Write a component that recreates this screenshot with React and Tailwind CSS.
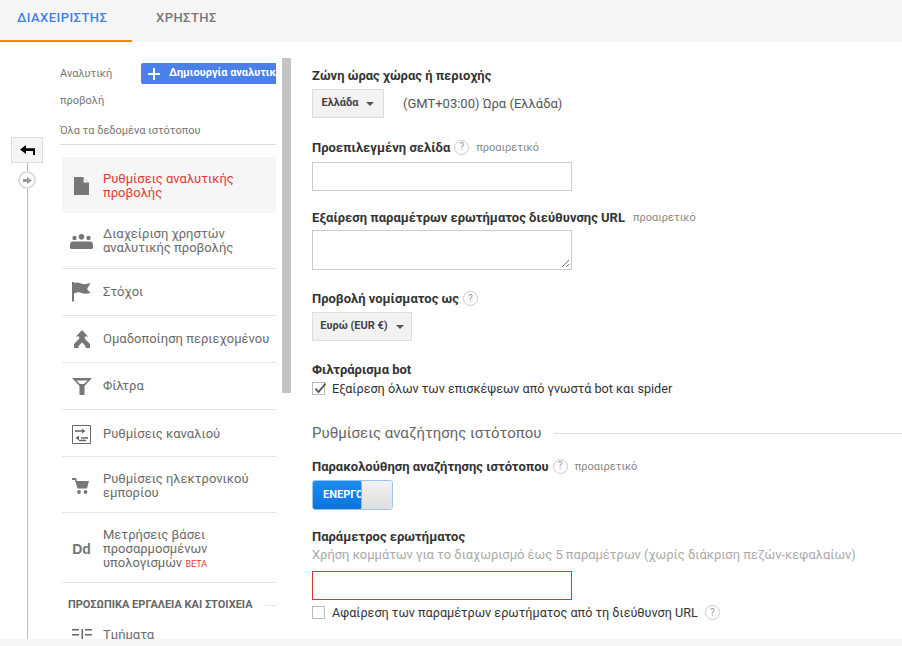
const rowClass = "flex items-center border-b border-[#e4e4ec] ml-[2px] text-[13px] leading-[14px] text-[#6b6b6b]";

function DocIcon() {
  return (
    <svg width="15" height="18" viewBox="0 0 15 18" fill="#777">
      <path d="M0 0h9l6 6v12H0z" />
      <path d="M9.600 0.500 14.500 5.400H9.600z" fill="#f6f6f6" />
    </svg>
  );
}

function UsersIcon() {
  return (
    <svg width="23" height="15" viewBox="0 0 23 15" fill="#777">
      <circle cx="4.500" cy="4" r="2.200" />
      <circle cx="11.500" cy="2.800" r="2.800" />
      <circle cx="18.500" cy="4" r="2.200" />
      <path d="M0 11q0-3.500 3-3.500h17q3 0 3 3.500v2.500q0 1.500-1.500 1.500h-20Q0 15 0 13.500z" />
    </svg>
  );
}

function FlagIcon() {
  return (
    <svg width="19" height="20" viewBox="0 0 19 20" fill="#777">
      <path d="M0 0h2v19.500H0z" />
      <path d="M2 1q4-1 7 .5t9.500-.5l-3.500 6 3.500 4q-6 1.500-9 0t-7.500.5z" />
    </svg>
  );
}

function MergeIcon() {
  return (
    <svg width="16" height="18" viewBox="0 0 16 18" fill="#777">
      <path d="M8 0l6 6.500H10.800v2.300L16 14v4h-4.500v-2L8 12.500 4.500 16v2H0v-4l5.200-5.200V6.500H2z" />
    </svg>
  );
}

function FilterIcon() {
  return (
    <svg width="20" height="17" viewBox="0 0 20 17" fill="#777">
      <path d="M0 0h20l-7.500 8v9h-5V8zM4.500 2.500 8 6h4l3.500-3.500z" fillRule="evenodd" />
    </svg>
  );
}

function ChannelIcon() {
  return (
    <svg width="19" height="19" viewBox="0 0 19 19" fill="none" stroke="#666">
      <path d="M.5.500h18v18H.5z" />
      <path d="M3 6h8M14 15.500H7" strokeWidth="1.500" />
      <path d="M10 3.500 13.500 6 10 8.500zM7 10.500 3.500 13 7 15.500z" fill="#666" stroke="none" />
      <path d="M9 13h7" strokeWidth="1.500" />
    </svg>
  );
}

function CartIcon() {
  return (
    <svg width="17" height="16" viewBox="0 0 17 16" fill="#777" className="-ml-[3px]">
      <path d="M0 0h4l1 3h12l-2 7.500H5.500L3 2H0z" />
      <circle cx="7" cy="14" r="1.900" />
      <circle cx="13.500" cy="14" r="1.900" />
    </svg>
  );
}

function SegmentsIcon() {
  return (
    <svg width="20" height="12" viewBox="0 0 20 12" fill="#666">
      <path d="M0 0h7v1.500H0zM0 5h7v1.500H0zM0 10h7v1.500H0zM9.500 0H11v12H9.500zM13 0h7v1.500h-7zM13 5h7v1.500h-7zM13 10h7v1.500h-7z" />
    </svg>
  );
}

function Help() {
  return (
    <span className="inline-flex items-center justify-center w-[15px] h-[15px] rounded-full border border-[#ccc] text-[10px] leading-none text-[#999]">
      ?
    </span>
  );
}

function Optional() {
  return <span className="text-[11px] text-[#888]">προαιρετικό</span>;
}

function Caret() {
  return <span className="w-0 h-0 border-x-[4px] border-x-transparent border-t-[4px] border-t-[#555]" />;
}

function NavRow({ icon, className, children }) {
  return (
    <div className={`${rowClass} ${className}`}>
      <div className="w-[41px] flex justify-center shrink-0 pr-[2px]">{icon}</div>
      <div>{children}</div>
    </div>
  );
}

export default function App() {
  return (
    <div className="w-[902px] h-[646px] overflow-hidden bg-white flex flex-col font-['Roboto',sans-serif]">
      {/* tabs */}
      <div className="h-[42px] shrink-0 bg-[#f6f6f6] flex">
        <div className="w-[132px] h-[42px] border-b-2 border-[#f08c00] pl-[17px] pt-[8px] text-[13px] font-medium text-[#3b82e6] tracking-[0.45px]">
          ΔΙΑΧΕΙΡΙΣΤΗΣ
        </div>
        <div className="pl-[24px] pt-[8px] text-[13px] font-medium text-[#777] tracking-[0.45px]">ΧΡΗΣΤΗΣ</div>
      </div>

      <div className="flex-1 flex min-h-0">
        {/* back rail */}
        <div className="w-[60px] shrink-0 pl-[11px] pt-[95px] flex flex-col items-start">
          <div className="w-[32px] h-[26px] bg-[#f5f5f5] border border-[#ddd] flex items-center justify-center text-black">
            <svg width="15" height="10" viewBox="0 0 15 10" fill="currentColor">
              <path d="M0 4.500 6 0v3.200h9V10h-2V6H6v3z" />
            </svg>
          </div>
          <div className="w-[32px] flex flex-col items-center flex-1">
            <div className="w-px h-[8px] bg-[#bbb]" />
            <div className="w-[18px] h-[18px] rounded-full border-2 border-[#ddd] flex items-center justify-center">
              <svg width="9" height="7" viewBox="0 0 9 7" fill="#999">
                <path d="M0 2h4V0l5 3.500L4 7V5H0z" />
              </svg>
            </div>
            <div className="w-px flex-1 bg-[#bbb]" />
          </div>
        </div>

        {/* sidebar */}
        <div className="w-[216px] shrink-0 overflow-hidden h-[597px]">
          <div className="flex items-start h-[103px] border-b border-[#d8d8e0] text-[11px] text-[#777]">
            <div className="w-[81px] pt-[18px] leading-[27px]">
              Αναλυτική
              <br />
              προβολή
              <div className="whitespace-nowrap mt-[3px]">Όλα τα δεδομένα ιστότοπου</div>
            </div>
            <div className="mt-[21px] w-[135px] h-[21px] bg-[#4a80e8] rounded-l-[2px] flex items-center overflow-hidden text-white font-bold text-[11px] whitespace-nowrap pl-[7px]">
              <svg width="12" height="12" viewBox="0 0 12 12" fill="#fff" className="shrink-0 mr-[9px]">
                <path d="M5 0h2v5h5v2H7v5H5V7H0V5h5z" />
              </svg>
              Δημιουργία αναλυτικής προβολής
            </div>
          </div>
          <div className="h-[12px] bg-white" />
          <NavRow icon={<DocIcon />} className="h-[56px] bg-[#f6f6f6] border-b-0 pt-[2px] text-[#e53935]">
            Ρυθμίσεις αναλυτικής
            <br />
            προβολής
          </NavRow>
          <NavRow icon={<UsersIcon />} className="h-[56px] pt-[1px]">
            Διαχείριση χρηστών
            <br />
            αναλυτικής προβολής
          </NavRow>
          <NavRow icon={<FlagIcon />} className="h-[47px]">Στόχοι</NavRow>
          <NavRow icon={<MergeIcon />} className="h-[47px]">Ομαδοποίηση περιεχομένου</NavRow>
          <NavRow icon={<FilterIcon />} className="h-[47px]">Φίλτρα</NavRow>
          <NavRow icon={<ChannelIcon />} className="h-[47px] pt-[2px]">Ρυθμίσεις καναλιού</NavRow>
          <NavRow icon={<CartIcon />} className="h-[56px] pt-[2px]">
            Ρυθμίσεις ηλεκτρονικού
            <br />
            εμπορίου
          </NavRow>
          <NavRow icon={<span className="font-['Liberation_Sans',sans-serif] font-bold text-[14px] text-[#777]">Dd</span>} className="h-[70px] pt-[3px]">
            Μετρήσεις βάσει
            <br />
            προσαρμοσμένων
            <br />
            υπολογισμών <span className="text-[9px] text-[#e53935]">BETA</span>
          </NavRow>
          <div className="flex items-center h-[43px] pt-[2px] ml-[8px] text-[11px] font-bold text-[#666] whitespace-nowrap">
            ΠΡΟΣΩΠΙΚΑ ΕΡΓΑΛΕΙΑ ΚΑΙ ΣΤΟΙΧΕΙΑ
            <div className="flex-1 h-px bg-[#e4e4ec] ml-[10px]" />
          </div>
          <div className="flex items-center ml-[2px] -mt-[1px] text-[13px] text-[#6b6b6b]">
            <div className="w-[41px] flex justify-center pr-[2px]"><SegmentsIcon /></div>
            Τμήματα
          </div>
        </div>

        {/* scrollbar */}
        <div className="w-[9px] h-[335px] ml-[6px] mt-[16px] shrink-0 bg-[#c4c4c4]" />

        {/* form */}
        <div className="flex-1 min-w-0 pl-[21px] pt-[26px] text-[13px] text-[#333] overflow-hidden">
          <div className="font-bold leading-[15px]">Ζώνη ώρας χώρας ή περιοχής</div>
          <div className="flex items-center mt-[6px]">
            <div className="w-[72px] h-[29px] bg-[#f2f2f2] border border-[#ddd] flex items-center justify-center gap-[8px] text-[11px] font-bold text-[#444]">
              Ελλάδα <Caret />
            </div>
            <div className="ml-[19px] text-[#555]">(GMT+03:00) Ώρα (Ελλάδα)</div>
          </div>

          <div className="flex items-center gap-[4px] mt-[21px] leading-[15px]">
            <span className="font-bold">Προεπιλεγμένη σελίδα</span>
            <Help />
            <span className="ml-[3px]"><Optional /></span>
          </div>
          <div className="w-[260px] h-[29px] border border-[#ccc] mt-[7px]" />

          <div className="flex items-center gap-[8px] mt-[19px] leading-[15px] whitespace-nowrap">
            <span className="font-bold">Εξαίρεση παραμέτρων ερωτήματος διεύθυνσης URL</span>
            <Optional />
          </div>
          <div className="relative w-[260px] h-[40px] border border-[#ccc] mt-[5px]">
            <svg width="9" height="9" viewBox="0 0 9 9" stroke="#777" className="absolute right-px bottom-px">
              <path d="M1 8 8 1M5 8 8 5" />
            </svg>
          </div>

          <div className="flex items-center gap-[4px] mt-[21px] leading-[15px]">
            <span className="font-bold">Προβολή νομίσματος ως</span>
            <Help />
          </div>
          <div className="w-[100px] h-[29px] bg-[#f2f2f2] border border-[#ddd] flex items-center justify-center gap-[8px] text-[11px] font-bold text-[#444] mt-[6px]">
            Ευρώ (EUR €) <Caret />
          </div>

          <div className="font-bold leading-[15px] mt-[21px]">Φιλτράρισμα bot</div>
          <div className="flex items-center gap-[7px] mt-[4px] leading-[15px] text-[12.650px]">
            <div className="relative w-[13px] h-[13px] border border-[#bbb]">
              <svg width="14" height="13" viewBox="0 0 14 13" fill="none" stroke="#555" strokeWidth="1.800" className="absolute -top-[1px] left-0">
                <path d="M2.500 6.500 5.500 10 12.500 1.500" />
              </svg>
            </div>
            <span>Εξαίρεση όλων των επισκέψεων από γνωστά bot και spider</span>
          </div>

          <div className="flex items-center mt-[27px] text-[15px] leading-[20px] text-[#666]">
            Ρυθμίσεις αναζήτησης ιστότοπου
            <div className="flex-1 h-px bg-[#ddd] ml-[13px]" />
          </div>

          <div className="flex items-center gap-[4px] mt-[15px] leading-[15px] whitespace-nowrap">
            <span className="font-bold">Παρακολούθηση αναζήτησης ιστότοπου</span>
            <Help />
            <span className="ml-[3px]"><Optional /></span>
          </div>
          <div className="flex w-[81px] h-[30px] mt-[6px] rounded-[3px] border border-[#9dc3ee] overflow-hidden">
            <div className="w-[48px] bg-gradient-to-b from-[#1a8cf0] to-[#0b74dc] text-white text-[11px] font-bold flex items-center pl-[10px] overflow-hidden whitespace-nowrap">ΕΝΕΡΓΟ</div>
            <div className="flex-1 bg-gradient-to-b from-[#f2f2f2] to-[#dedede] border-l border-[#aaa] rounded-l-[2px]" />
          </div>

          <div className="font-bold leading-[15px] mt-[19px]">Παράμετρος ερωτήματος</div>
          <div className="mt-[3px] leading-[15px] text-[#aaa] whitespace-nowrap text-[12.950px]">Χρήση κομμάτων για το διαχωρισμό έως 5 παραμέτρων (χωρίς διάκριση πεζών-κεφαλαίων)</div>
          <div className="w-[260px] h-[29px] border border-[#d33] mt-[9px]" />
          <div className="flex items-center gap-[7px] mt-[5px] leading-[15px] whitespace-nowrap text-[12.650px]">
            <div className="w-[13px] h-[13px] border border-[#bbb]" />
            <span>Αφαίρεση των παραμέτρων ερωτήματος από τη διεύθυνση URL</span>
            <Help />
          </div>
        </div>
      </div>

      {/* bottom strip */}
      <div className="h-[7px] shrink-0 bg-[#f6f6f6]" />
    </div>
  );
}
